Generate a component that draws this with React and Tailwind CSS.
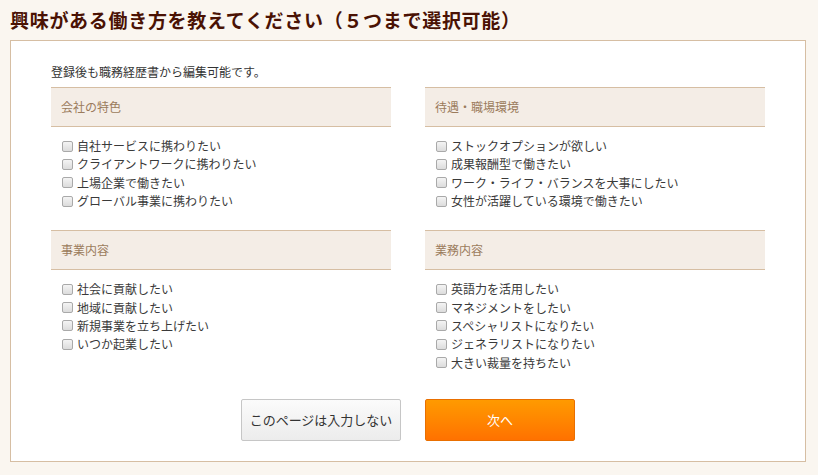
import React from 'react';

const sections = [
    { title: '会社の特色', items: ['自社サービスに携わりたい', 'クライアントワークに携わりたい', '上場企業で働きたい', 'グローバル事業に携わりたい'] },
    { title: '待遇・職場環境', items: ['ストックオプションが欲しい', '成果報酬型で働きたい', 'ワーク・ライフ・バランスを大事にしたい', '女性が活躍している環境で働きたい'] },
    { title: '事業内容', items: ['社会に貢献したい', '地域に貢献したい', '新規事業を立ち上げたい', 'いつか起業したい'] },
    { title: '業務内容', items: ['英語力を活用したい', 'マネジメントをしたい', 'スペシャリストになりたい', 'ジェネラリストになりたい', '大きい裁量を持ちたい'] },
];

const Section = ({ title, items }) => (
    <div>
        <div className="h-[40px] border-y border-[#d6bea3] bg-[#f4ede6] px-[10px] flex items-center text-[12px] text-[#9b7b5c]">
            {title}
        </div>
        <ul className="pt-[10px] pl-[11px]">
            {items.map(item => (
                <li key={item} className="flex items-center gap-[4px] h-[18.3px] text-[12px] text-[#3a3a3a]">
                    <span className="w-[11px] h-[11px] rounded-[2px] border border-[#a9a9a9] bg-gradient-to-b from-[#f4f4f4] to-[#dcdcdc] shrink-0"></span>
                    <span>{item}</span>
                </li>
            ))}
        </ul>
    </div>
);

const App = () => {
    return (
        <div className="min-h-screen w-[818px] bg-[#faf6f0] font-['Noto_Sans_CJK_JP',sans-serif]">
            {/* Title */}
            <h1 className="h-[40px] px-[10px] pt-[7px] text-[19px] leading-[26px] font-bold text-[#4a1204] tracking-[0.7px]">
                興味がある働き方を教えてください（５つまで選択可能）
            </h1>

            {/* Panel */}
            <div className="mx-[10px] w-[796px] border border-[#d6bea3] bg-white px-[40px] pt-[22px] pb-[20px]">
                <p className="text-[12px] leading-[18px] text-[#333] mb-[6px]">登録後も職務経歴書から編集可能です。</p>

                <div className="grid grid-cols-2 gap-x-[34px] gap-y-[20px]">
                    {sections.map(s => <Section key={s.title} {...s} />)}
                </div>

                <div className="flex justify-center gap-[24px] mt-[27px]">
                    <button className="w-[160px] h-[42px] rounded-[2px] border border-[#c6c6c6] bg-gradient-to-b from-[#fbfbfb] to-[#ececec] text-[13px] text-[#333]">
                        このページは入力しない
                    </button>
                    <button className="w-[150px] h-[42px] rounded-[2px] border border-[#e96f00] bg-gradient-to-b from-[#ff9a00] to-[#ff7100] text-[13px] text-white">
                        次へ
                    </button>
                </div>
            </div>
        </div>
    );
};

export default App;
